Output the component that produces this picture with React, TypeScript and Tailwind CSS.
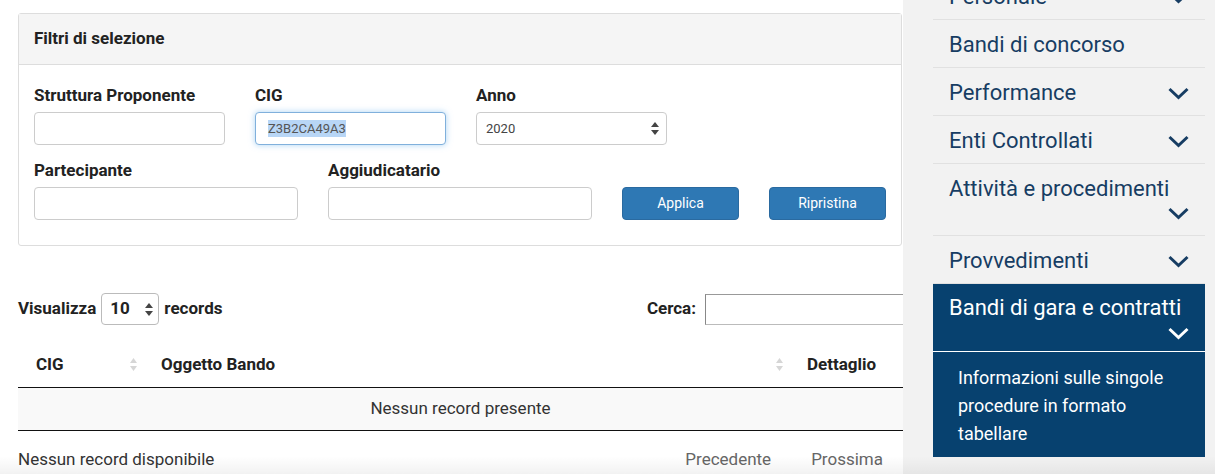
import React from "react";

const MENU = [
  { label: "Personale", chevron: true },
  { label: "Bandi di concorso", chevron: false },
  { label: "Performance", chevron: true },
  { label: "Enti Controllati", chevron: true },
  { label: "Attività e procedimenti", chevron: true, wrap: true },
  { label: "Provvedimenti", chevron: true },
];

function Chevron({ className = "" }: { className?: string }) {
  return (
    <svg width="21" height="13" viewBox="0 0 21 13" className={className} fill="none">
      <path d="M1.5 2 L10.5 10.5 L19.5 2" stroke="currentColor" strokeWidth="3" />
    </svg>
  );
}

function SortIcon() {
  return (
    <svg width="7" height="13" viewBox="0 0 7 13">
      <path d="M3.5 0 L7 5 L0 5 Z" fill="#d6d6d6" />
      <path d="M3.5 13 L7 8 L0 8 Z" fill="#d6d6d6" />
    </svg>
  );
}

function SelectArrows() {
  return (
    <svg width="8" height="13" viewBox="0 0 8 13">
      <path d="M4 0 L8 5 L0 5 Z" fill="#444" />
      <path d="M4 13 L8 8 L0 8 Z" fill="#444" />
    </svg>
  );
}

function Field({ label, width, children }: { label: string; width: string; children?: React.ReactNode }) {
  return (
    <div className={`flex flex-col ${width}`}>
      <label className="whitespace-nowrap text-[17px] font-bold leading-[22px] text-[#222]">{label}</label>
      {children ?? (
        <div className="mt-[6px] h-[33px] rounded-[4px] border border-[#ccc] bg-white" />
      )}
    </div>
  );
}

export default function App() {
  return (
    <div className="relative flex h-[474px] w-[1215px] overflow-hidden bg-white font-['Roboto',sans-serif] text-[#333]">
      {/* Main column */}
      <main className="w-[903px] shrink-0 overflow-hidden pl-[18px] pt-[13px]">
        <section className="w-[884px] rounded-[3px] border border-[#ddd]">
          <div className="flex h-[51px] items-center border-b border-[#ddd] bg-[#f5f5f5] px-[15px]">
            <h2 className="text-[17px] font-bold text-[#222]">Filtri di selezione</h2>
          </div>
          <div className="px-[15px] pb-[25px] pt-[19px]">
            <div className="flex gap-[30px]">
              <Field label="Struttura Proponente" width="w-[191px]" />
              <Field label="CIG" width="w-[191px]">
                <div className="mt-[6px] flex h-[33px] items-center rounded-[4px] border border-[#80b0dc] bg-white px-[12px] shadow-[0_0_6px_rgba(102,175,233,0.55)]">
                  <span className="bg-[#b8d6f6] text-[13px] leading-[17px] text-[#555]">Z3B2CA49A3</span>
                </div>
              </Field>
              <Field label="Anno" width="w-[191px]">
                <div className="mt-[6px] flex h-[33px] items-center justify-between rounded-[4px] border border-[#ccc] bg-white pl-[9px] pr-[7px]">
                  <span className="text-[13px] text-[#444]">2020</span>
                  <SelectArrows />
                </div>
              </Field>
            </div>
            <div className="mt-[14px] flex items-end gap-[30px]">
              <Field label="Partecipante" width="w-[264px]" />
              <Field label="Aggiudicatario" width="w-[264px]" />
              <button className="h-[33px] w-[117px] rounded-[4px] border border-[#2a6aa0] bg-[#2e78b4] text-[14px] text-white">
                Applica
              </button>
              <button className="h-[33px] w-[117px] rounded-[4px] border border-[#2a6aa0] bg-[#2e78b4] text-[14px] text-white">
                Ripristina
              </button>
            </div>
          </div>
        </section>

        {/* Length + search */}
        <div className="mt-[47px] flex h-[32px] w-[927px] items-center">
          <span className="text-[17px] font-bold text-[#222]">Visualizza</span>
          <div className="ml-[5px] flex h-[32px] w-[58px] items-center justify-between rounded-[4px] border border-[#bbb] pl-[8px] pr-[5px]">
            <span className="text-[17px] font-bold text-[#222]">10</span>
            <SelectArrows />
          </div>
          <span className="ml-[5px] text-[17px] font-bold text-[#222]">records</span>
          <span className="ml-auto text-[17px] font-bold text-[#222]">Cerca:</span>
          <div className="ml-[9px] h-[31px] w-[240px] shrink-0 border border-[#bbb] border-l-[#888] border-t-[#999]" />
        </div>

        {/* Table */}
        <table className="mt-[18px] w-[885px] border-collapse">
          <thead>
            <tr className="h-[44px] border-b border-[#111]">
              <th className="w-[125px] pl-[18px] pr-[6px] text-left text-[17px] font-bold text-[#222]">
                <div className="flex items-center justify-between">
                  CIG <SortIcon />
                </div>
              </th>
              <th className="pl-[18px] pr-[6px] text-left text-[17px] font-bold text-[#222]">
                <div className="flex items-center justify-between">
                  Oggetto Bando <SortIcon />
                </div>
              </th>
              <th className="w-[114px] pl-[18px] text-left text-[17px] font-bold text-[#222]">Dettaglio</th>
            </tr>
          </thead>
          <tbody>
            <tr className="h-[43px] border-b border-[#111] bg-[#f9f9f9]">
              <td colSpan={3} className="text-center text-[17px] text-[#333]">
                Nessun record presente
              </td>
            </tr>
          </tbody>
        </table>
        <div className="mt-[16px] flex w-[885px] items-center text-[17px]">
          <span className="text-[#333]">Nessun record disponibile</span>
          <span className="ml-auto text-[#666]">Precedente</span>
          <span className="ml-[40px] mr-[20px] text-[#666]">Prossima</span>
        </div>
      </main>

      {/* Sidebar */}
      <aside className="flex-1 bg-[#f2f2f2] pl-[30px] pr-[10px]">
        <ul className="-mt-[28px]">
          {MENU.map((item) => (
            <li key={item.label} className="border-b border-[#e1e1e1] pb-[10px] pl-[16px] pr-[16px] pt-[13px] text-[#173d63]">
              {item.wrap ? (
                <div className="flex flex-col">
                  <span className="text-[22px] leading-[24px]">{item.label}</span>
                  <div className="flex h-[24px] items-center justify-end">
                    <Chevron />
                  </div>
                </div>
              ) : (
                <div className="flex h-[24px] items-center justify-between">
                  <span className="whitespace-nowrap text-[22px] leading-[24px]">{item.label}</span>
                  {item.chevron && <Chevron />}
                </div>
              )}
            </li>
          ))}
          <li className="bg-[#07416f] text-white">
            <div className="border-b border-white px-[16px] pb-[6px] pt-[12px]">
              <span className="block text-[22px] leading-[24px]">Bandi di gara e contratti</span>
              <div className="mt-[1px] flex h-[24px] items-center justify-end">
                <Chevron />
              </div>
            </div>
            <div className="pb-[9px] pl-[25px] pr-[16px] pt-[12px] text-[18px] leading-[28px]">
              Informazioni sulle singole procedure in formato tabellare
            </div>
          </li>
        </ul>
      </aside>

      {/* bottom fade */}
      <div className="pointer-events-none absolute bottom-0 left-0 h-[18px] w-full bg-gradient-to-b from-transparent to-[rgba(0,0,0,0.05)]" />
    </div>
  );
}
